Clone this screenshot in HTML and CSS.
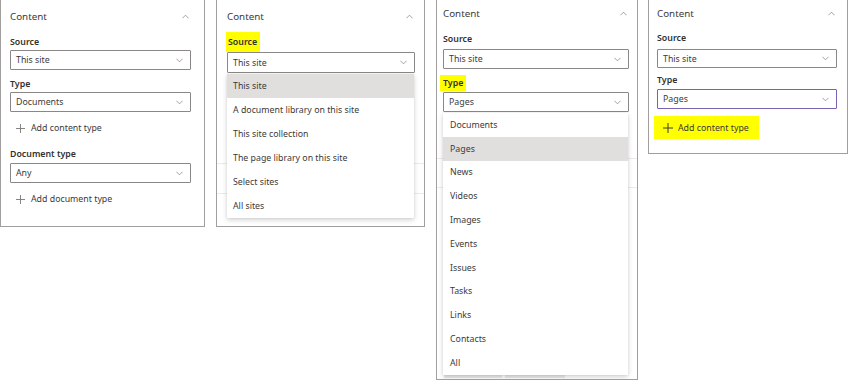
FILE: index.html
```html
<html>
    <head>
        <title>Content web part</title>
        <link rel="stylesheet" href="styles.css">
    </head>
    <body>
        <div class="row">
            <section class="pane p1">
                <div class="head">
                    <span>Content</span>
                    <svg class="up" viewBox="0 0 8 5"><path d="M0.5 4.5 L4 1 L7.5 4.5"/></svg>
                </div>
                <div class="lbl">Source</div>
                <div class="dd"><span>This site</span><svg class="down" viewBox="0 0 8 5"><path d="M0.5 0.5 L4 4 L7.5 0.5"/></svg></div>
                <div class="lbl">Type</div>
                <div class="dd"><span>Documents</span><svg class="down" viewBox="0 0 8 5"><path d="M0.5 0.5 L4 4 L7.5 0.5"/></svg></div>
                <div class="add"><svg class="plus" viewBox="0 0 10 10"><path d="M5 0 V10 M0 5 H10"/></svg><span>Add content type</span></div>
                <div class="lbl">Document type</div>
                <div class="dd"><span>Any</span><svg class="down" viewBox="0 0 8 5"><path d="M0.5 0.5 L4 4 L7.5 0.5"/></svg></div>
                <div class="add"><svg class="plus" viewBox="0 0 10 10"><path d="M5 0 V10 M0 5 H10"/></svg><span>Add document type</span></div>
            </section>

            <section class="pane p2">
                <div class="head">
                    <span>Content</span>
                    <svg class="up" viewBox="0 0 8 5"><path d="M0.5 4.5 L4 1 L7.5 4.5"/></svg>
                </div>
                <div class="lbl mark">Source</div>
                <div class="dd"><span>This site</span><svg class="down" viewBox="0 0 8 5"><path d="M0.5 0.5 L4 4 L7.5 0.5"/></svg></div>
                <!-- covered by the open menu -->
                <div class="lbl"></div>
                <div class="dd hidden"></div>
                <div class="add"></div>
                <div class="rule"></div>
                <div class="section"></div>
                <div class="rule"></div>
                <div class="menu">
                    <div class="opt on">This site</div>
                    <div class="opt">A document library on this site</div>
                    <div class="opt">This site collection</div>
                    <div class="opt">The page library on this site</div>
                    <div class="opt">Select sites</div>
                    <div class="opt">All sites</div>
                </div>
            </section>

            <section class="pane p3">
                <div class="head">
                    <span>Content</span>
                    <svg class="up" viewBox="0 0 8 5"><path d="M0.5 4.5 L4 1 L7.5 4.5"/></svg>
                </div>
                <div class="lbl">Source</div>
                <div class="dd"><span>This site</span><svg class="down" viewBox="0 0 8 5"><path d="M0.5 0.5 L4 4 L7.5 0.5"/></svg></div>
                <div class="lbl mark">Type</div>
                <div class="dd"><span>Pages</span><svg class="down" viewBox="0 0 8 5"><path d="M0.5 0.5 L4 4 L7.5 0.5"/></svg></div>
                <!-- covered by the open menu -->
                <div class="add"></div>
                <div class="rule"></div>
                <div class="section"></div>
                <div class="rule"></div>
                <div class="filler"></div>
                <div class="tools">
                    <div class="tool"><i class="bar"></i></div>
                    <div class="tool"><i class="dot"></i><i class="dot"></i><i class="dot"></i></div>
                </div>
                <div class="menu">
                    <div class="opt">Documents</div>
                    <div class="opt on">Pages</div>
                    <div class="opt">News</div>
                    <div class="opt">Videos</div>
                    <div class="opt">Images</div>
                    <div class="opt">Events</div>
                    <div class="opt">Issues</div>
                    <div class="opt">Tasks</div>
                    <div class="opt">Links</div>
                    <div class="opt">Contacts</div>
                    <div class="opt">All</div>
                </div>
            </section>

            <section class="pane p4">
                <div class="head">
                    <span>Content</span>
                    <svg class="up" viewBox="0 0 8 5"><path d="M0.5 4.5 L4 1 L7.5 4.5"/></svg>
                </div>
                <div class="lbl">Source</div>
                <div class="dd"><span>This site</span><svg class="down" viewBox="0 0 8 5"><path d="M0.5 0.5 L4 4 L7.5 0.5"/></svg></div>
                <div class="lbl">Type</div>
                <div class="dd focus"><span>Pages</span><svg class="down" viewBox="0 0 8 5"><path d="M0.5 0.5 L4 4 L7.5 0.5"/></svg></div>
                <div class="add mark"><svg class="plus" viewBox="0 0 10 10"><path d="M5 0 V10 M0 5 H10"/></svg><span>Add content type</span></div>
            </section>
        </div>
    </body>
</html>
```

FILE: styles.css
```css
body{
    margin: 0;
    background: #fff;
    color: #323130;
    font-family: "Noto Sans", "Open Sans", sans-serif;
    font-size: 8.8px;
}
.row{
    display: flex;
    align-items: flex-start;
}
.pane{
    position: relative;
    box-sizing: border-box;
    margin-top: -1px;
    border: 1px solid #a19f9d;
    background: #fff;
    overflow: hidden;
}
.head{
    display: flex;
    align-items: center;
    justify-content: space-between;
    font-size: 9.8px;
    color: #3b3a39;
    padding-right: 2px;
}
.up, .down{
    width: 7px;
    height: 5px;
    fill: none;
    stroke: #8a8886;
    stroke-width: 0.9;
}
.lbl{
    font-weight: 600;
    height: 14px;
    line-height: 14px;
}
.mark{
    width: fit-content;
    background: #ffff00;
}
.dd{
    display: flex;
    align-items: center;
    justify-content: space-between;
    box-sizing: border-box;
    height: 20px;
    border: 1px solid #8a8886;
    border-radius: 1px;
    padding: 0 7px 0 5px;
    color: #3b3a39;
}
.dd.focus{
    border-color: #7a62b0;
}
.hidden{
    visibility: hidden;
}
.add{
    display: flex;
    align-items: center;
    height: 18px;
    color: #3b3a39;
}
.plus{
    width: 9px;
    height: 9px;
    margin: 0 6px 0 6px;
    fill: none;
    stroke: #797775;
    stroke-width: 1;
}
.rule{
    height: 1px;
    background: #edebe9;
}
.menu{
    position: absolute;
    background: #fff;
    box-shadow: 0 2px 5px rgba(0, 0, 0, 0.18), 0 0 1px rgba(0, 0, 0, 0.12);
}
.opt{
    display: flex;
    align-items: center;
    height: 24px;
    padding-left: 6px;
    color: #3b3a39;
}
.opt.on{
    background: #e1dfdd;
}

/* first pane: Documents */
.p1{
    width: 205px;
    padding: 0 13px 18px 9px;
}
.p1 .head{ height: 32px; }
.p1 .lbl{ margin-top: 7px; }
.p1 .head + .lbl{ margin-top: 3px; }
.p1 .dd{ margin-top: 1px; }
.p1 .add{ margin-top: 7px; }
.p1 .add + .lbl{ margin-top: 10px; }
.p1 .add + .lbl + .dd{ margin-top: 2px; }

/* second pane: source menu open */
.p2{
    width: 209px;
    margin-left: 11px;
    padding: 0 9px 32px 10px;
}
.p2 .head{ height: 32px; }
.p2 .mark{
    height: 20px;
    line-height: 21px;
    margin-left: -1px;
    padding: 0 3px 0 2px;
}
.p2 .dd{ height: 21px; }
.p2 .dd + .lbl{ margin-top: 7px; }
.p2 .lbl + .dd{ margin-top: 0; }
.p2 .dd + .lbl + .dd{ margin-top: 1px; height: 20px; }
.p2 .add{ margin-top: 7px; }
.p2 .rule{ margin: 0 -9px 0 -10px; }
.p2 .add + .rule{ margin-top: 23px; }
.p2 .section{ height: 29px; }
.p2 .menu{
    top: 74px;
    left: 10px;
    width: 187px;
}

/* third pane: type menu open */
.p3{
    width: 202px;
    margin-left: 11px;
    padding: 0 8px 1px 6px;
}
.p3 .head{ height: 26px; }
.p3 .head + .lbl{ margin-top: 6px; }
.p3 .dd{ margin-top: 3px; }
.p3 .mark{
    height: 16px;
    line-height: 17px;
    margin: 6px 0 0 -3px;
    padding: 0 3px;
}
.p3 .mark + .dd{ margin-top: 1px; }
.p3 .add{ margin-top: 7px; }
.p3 .rule{ margin: 0 -8px 0 -6px; }
.p3 .add + .rule{ margin-top: 21px; }
.p3 .section{ height: 28px; }
.p3 .filler{ height: 166px; }
.p3 .tools{
    display: flex;
    gap: 3px;
    padding-left: 1px;
}
.tool{
    display: flex;
    align-items: flex-end;
    justify-content: center;
    gap: 2px;
    width: 58px;
    height: 24px;
    background: #edebe9;
}
.tool + .tool{ width: 60px; }
.bar{
    width: 8px;
    height: 2px;
    margin-bottom: 3px;
    background: #605e5c;
}
.dot{
    width: 2px;
    height: 2px;
    margin-bottom: 3px;
    background: #605e5c;
}
.p3 .menu{
    top: 113px;
    left: 6px;
    width: 185px;
}
.p3 .opt{
    height: 23.8px;
    padding-left: 7px;
}

/* fourth pane: add content type */
.p4{
    width: 200px;
    margin-left: 10px;
    padding: 0 10px 14px 8px;
}
.p4 .head{ height: 26px; }
.p4 .lbl{ margin-top: 5px; }
.p4 .head + .lbl + .dd{ margin-top: 4px; height: 19px; }
.p4 .lbl + .dd.focus{ margin-top: 2px; }
.p4 .add.mark{
    height: 23px;
    margin: 7px 0 0 -3px;
    padding-right: 10px;
}
.p4 .plus{
    width: 10px;
    height: 10px;
    margin: 0 5px 0 9px;
    stroke: #3b3a39;
}
```
